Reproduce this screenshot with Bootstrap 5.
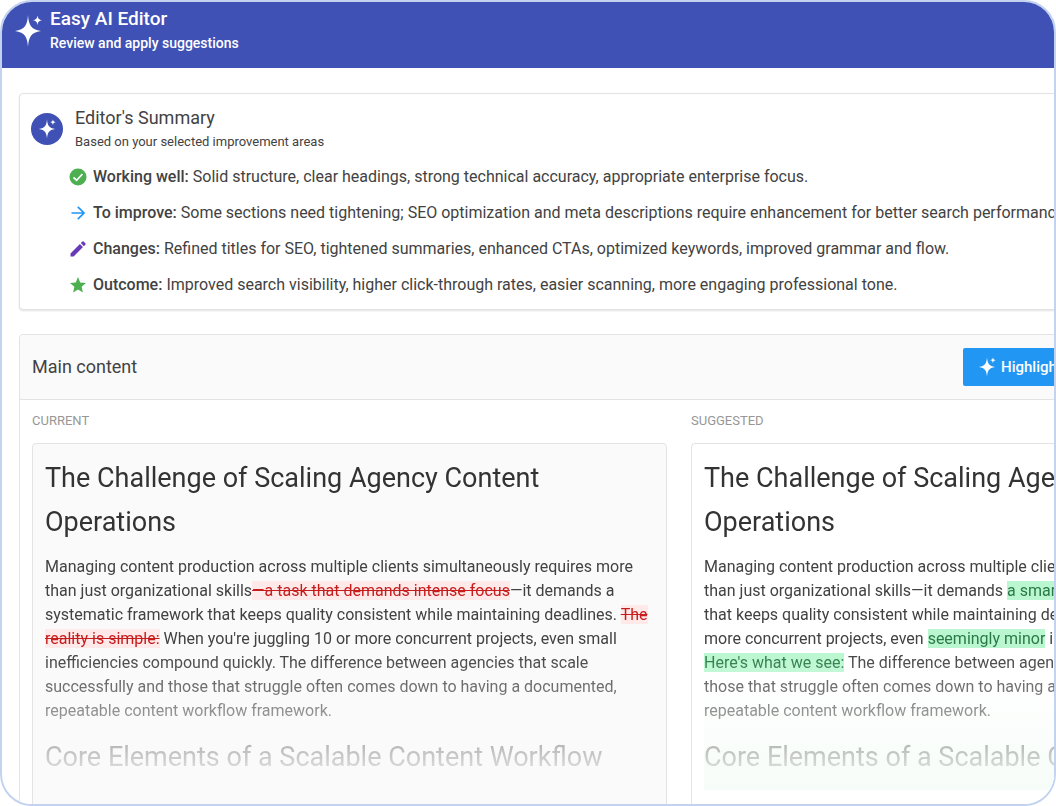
<!DOCTYPE html>
<html lang="en">
<head>
<meta charset="utf-8">
<meta name="viewport" content="width=device-width, initial-scale=1">
<title>Easy AI Editor</title>
<link href="https://cdn.jsdelivr.net/npm/bootstrap@5.3.0/dist/css/bootstrap.min.css" rel="stylesheet">
<style>
  body { font-family: Roboto, "Liberation Sans", sans-serif; font-size: 16px; line-height: 24px; color: #424242; background: #fff; }
  .app-frame { height: 100vh; border: 2px solid #c3d3ef; border-radius: 32px; }
  .app-bar { background: #3f51b5; height: 66px; padding: 5px 12px; }
  .app-bar h1 { font-size: 19px; line-height: 24px; font-weight: 500; }
  .app-bar p { font-size: 14px; line-height: 24px; font-weight: 500; }
  .workspace { min-width: 1354px; padding: 25px 17px 0; }
  .panel { border: 1px solid #e3e3e3; border-radius: 4px; background: #fff; }
  .summary { padding: 12px 11px; margin-bottom: 24px; box-shadow: 0 1px 2px rgba(0,0,0,.12); }
  .avatar { width: 32px; height: 32px; margin-top: 7px; background: #3f51b5; }
  .panel-title { font-size: 18px; line-height: 24px; font-weight: 400; }
  .summary-sub { font-size: 13px; line-height: 24px; }
  .points { padding-left: 38px; margin-top: 11px; gap: 12px; }
  .points strong { font-weight: 500; }
  .points li { gap: 6px; }
  .points li + li { padding-top: 0; }
  .panel-head { background: #fafafa; border-bottom: 1px solid #e3e3e3; padding: 13px 12px; border-radius: 4px 4px 0 0; }
  .actions { width: 363px; }
  .btn-action { background: #2196f3; color: #fff; font-size: 15px; line-height: 24px; font-weight: 500; padding: 7px 14px; border-radius: 2px; gap: 4px; }
  .btn-action:hover { background: #1e88e5; color: #fff; }
  .compare { display: grid; grid-template-columns: 1fr 1fr; gap: 24px; padding: 9px 12px 0; }
  .col-label { font-size: 13px; line-height: 24px; font-weight: 400; color: #979797; margin-bottom: 10px; }
  .doc { border: 1px solid #e3e3e3; border-radius: 4px; padding: 12px; height: 400px; }
  .doc-current { background: #fafafa; }
  .doc-suggested .doc-body { background: linear-gradient(#fff 66%, #f6fcf8); }
  .doc-fade { height: 334px; overflow: hidden; -webkit-mask-image: linear-gradient(#000 59%, transparent); mask-image: linear-gradient(#000 59%, transparent); }
  .doc h3 { font-size: 27px; line-height: 44px; font-weight: 400; margin: 0 0 11px; color: #333; }
  .doc p { margin: 0 0 12px; }
  .doc del { color: #c71c1c; background: #ffe9e9; }
  .doc ins { color: #2a7a46; background: #baf7d0; text-decoration: none; }
</style>
</head>
<body>
<svg class="d-none" aria-hidden="true">
  <symbol id="sparkle" viewBox="0 0 28 32">
    <path fill="currentColor" d="M14 0C14.700 10 17 14.600 27 16C17 17.400 14.700 22 14 32C13.300 22 11 17.400 1 16C11 14.600 13.300 10 14 0Z"/>
    <path fill="currentColor" d="M23.500 0.500C23.900 3.600 25 4.700 28 5.200C25 5.700 23.900 6.800 23.500 10C23.100 6.800 22 5.700 19 5.200C22 4.700 23.100 3.600 23.500 0.500Z"/>
  </symbol>
</svg>
<main class="app-frame overflow-hidden">
  <header class="app-bar d-flex">
    <svg class="flex-shrink-0 text-white mt-2 me-2" width="28" height="32" aria-hidden="true"><use href="#sparkle"/></svg>
    <div class="text-white">
      <h1 class="m-0">Easy AI Editor</h1>
      <p class="m-0">Review and apply suggestions</p>
    </div>
  </header>

  <div class="workspace">
    <section class="panel summary">
      <div class="d-flex">
        <div class="avatar rounded-circle d-flex align-items-center justify-content-center text-white flex-shrink-0 me-2">
          <svg width="18" height="20" aria-hidden="true"><use href="#sparkle"/></svg>
        </div>
        <div class="ms-1">
          <h2 class="panel-title m-0">Editor's Summary</h2>
          <p class="summary-sub m-0">Based on your selected improvement areas</p>
        </div>
      </div>
      <ul class="points list-unstyled d-flex flex-column mb-0">
        <li class="d-flex align-items-center">
          <svg width="18" height="18" viewBox="0 0 18 18" aria-hidden="true"><circle cx="9" cy="9" r="8.500" fill="#4caf50"/><path d="M4.500 9.300L7.600 12.300L13.500 6" fill="none" stroke="#fff" stroke-width="1.700"/></svg>
          <span><strong>Working well:</strong> Solid structure, clear headings, strong technical accuracy, appropriate enterprise focus.</span>
        </li>
        <li class="d-flex align-items-center">
          <svg width="18" height="18" viewBox="0 0 18 18" aria-hidden="true"><path d="M2.500 9H15M8.800 2.800L15 9L8.800 15.200" fill="none" stroke="#2196f3" stroke-width="1.700"/></svg>
          <span class="text-nowrap"><strong>To improve:</strong> Some sections need tightening; SEO optimization and meta descriptions require enhancement for better search performance.</span>
        </li>
        <li class="d-flex align-items-center">
          <svg width="18" height="18" viewBox="0 0 18 18" aria-hidden="true"><path d="M1.500 13.400L10.900 4L14 7.100L4.600 16.500H1.500ZM11.800 3.100L13.400 1.500Q14 1 14.600 1.500L16.500 3.400Q17 4 16.500 4.600L14.900 6.200Z" fill="#673ab7"/></svg>
          <span><strong>Changes:</strong> Refined titles for SEO, tightened summaries, enhanced CTAs, optimized keywords, improved grammar and flow.</span>
        </li>
        <li class="d-flex align-items-center">
          <svg width="18" height="18" viewBox="0 0 18 18" aria-hidden="true"><path d="M9 1L11.200 6.400L17 6.900L12.600 10.700L13.900 16.400L9 13.400L4.100 16.400L5.400 10.700L1 6.900L6.800 6.400Z" fill="#4caf50"/></svg>
          <span><strong>Outcome:</strong> Improved search visibility, higher click-through rates, easier scanning, more engaging professional tone.</span>
        </li>
      </ul>
    </section>

    <section class="panel">
      <div class="panel-head d-flex align-items-center justify-content-between">
        <h2 class="panel-title m-0">Main content</h2>
        <div class="actions d-flex">
          <button type="button" class="btn btn-action border-0 d-flex align-items-center">
            <svg width="20" height="20" aria-hidden="true"><use href="#sparkle"/></svg>
            Highlight
          </button>
        </div>
      </div>
      <div class="compare">
        <div>
          <div class="col-label">CURRENT</div>
          <article class="doc doc-current">
            <div class="doc-body"><div class="doc-fade">
              <h3>The Challenge of Scaling Agency Content Operations</h3>
              <p>Managing content production across multiple clients simultaneously requires more than just organizational skills<del>—a task that demands intense focus</del>—it demands a systematic framework that keeps quality consistent while maintaining deadlines. <del>The reality is simple:</del> When you're juggling 10 or more concurrent projects, even small inefficiencies compound quickly. The difference between agencies that scale successfully and those that struggle often comes down to having a documented, repeatable content workflow framework.</p>
              <h3>Core Elements of a Scalable Content Workflow</h3>
            </div></div>
          </article>
        </div>
        <div>
          <div class="col-label">SUGGESTED</div>
          <article class="doc doc-suggested">
            <div class="doc-body"><div class="doc-fade">
              <h3>The Challenge of Scaling Agency Content Operations</h3>
              <p>Managing content production across multiple clients simultaneously requires more than just organizational skills—it demands <ins>a smart, systematic framework</ins><br>that keeps quality consistent while maintaining deadlines. When juggling 10 or<br>more concurrent projects, even <ins>seemingly minor</ins> inefficiencies add up.<br><ins>Here's what we see:</ins> The difference between agencies that scale and<br>those that struggle often comes down to having a documented,<br>repeatable content workflow framework.</p>
              <h3>Core Elements of a Scalable Content Workflow</h3>
            </div></div>
          </article>
        </div>
      </div>
    </section>
  </div>
</main>
<script src="https://cdn.jsdelivr.net/npm/bootstrap@5.3.0/dist/js/bootstrap.bundle.min.js"></script>
</body>
</html>
